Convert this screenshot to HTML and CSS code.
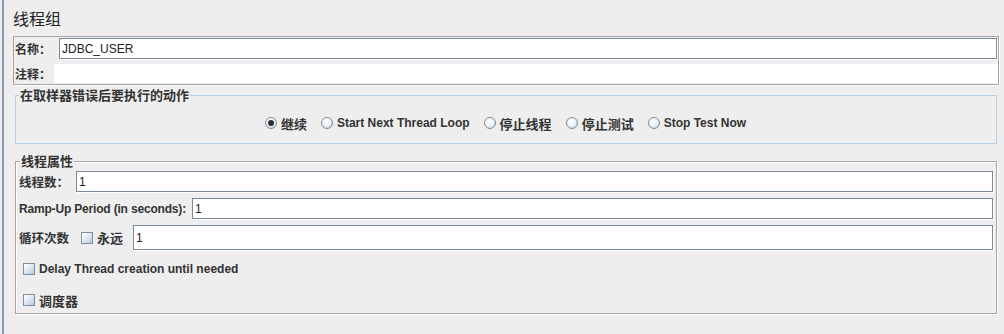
FILE: index.html
```html
<!DOCTYPE html>
<html lang="zh-CN">
<head>
    <meta charset="UTF-8">
    <title>线程组</title>
    <link rel="stylesheet" href="styles.css">
</head>
<body>
    <div class="page">
        <h1 class="title">线程组</h1>

        <!-- 名称 / 注释 -->
        <div class="name-box">
            <div class="field-row">
                <label class="zh lbl-name" for="name">名称：</label>
                <input class="text" id="name" type="text" value="JDBC_USER">
            </div>
            <div class="field-row comment-row">
                <label class="zh lbl-comment">注释：</label>
                <div class="comment-area"></div>
            </div>
        </div>

        <!-- 取样器错误 -->
        <fieldset class="group group-blue">
            <legend class="zh">在取样器错误后要执行的动作</legend>
            <div class="radio-row">
                <label class="opt"><span class="radio checked"></span><span class="zh">继续</span></label>
                <label class="opt"><span class="radio"></span>Start Next Thread Loop</label>
                <label class="opt"><span class="radio"></span><span class="zh">停止线程</span></label>
                <label class="opt"><span class="radio"></span><span class="zh">停止测试</span></label>
                <label class="opt"><span class="radio"></span>Stop Test Now</label>
            </div>
        </fieldset>

        <!-- 线程属性 -->
        <fieldset class="group group-etched">
            <legend class="zh">线程属性</legend>
            <div class="prop-row">
                <label class="zh lbl-threads">线程数：</label>
                <input class="text" type="text" value="1">
            </div>
            <div class="prop-row">
                <label class="lbl-ramp">Ramp-Up Period (in seconds):</label>
                <input class="text" type="text" value="1">
            </div>
            <div class="prop-row loop-row">
                <label class="zh lbl-loop">循环次数</label>
                <span class="check"></span>
                <span class="zh forever">永远</span>
                <input class="text" type="text" value="1">
            </div>
            <div class="check-row delay-row">
                <span class="check"></span>
                <span>Delay Thread creation until needed</span>
            </div>
            <div class="check-row sched-row">
                <span class="check"></span>
                <span class="zh">调度器</span>
            </div>
        </fieldset>
    </div>
</body>
</html>
```

FILE: styles.css
```css
body {
    margin: 0;
    background-color: #eeeeee;
    font-family: "Liberation Sans", Arial, "Noto Sans CJK SC", sans-serif;
    font-size: 12px;
    font-weight: bold;
    color: #333333;
    overflow: hidden;
}

.zh {
    font-family: "Noto Sans CJK SC", sans-serif;
    font-size: 13px;
}

.page {
    margin-left: 2px;
    border-left: 2px solid #8d9cab;
    padding: 8px 5px 0 9px;
    height: 326px;
}

.title {
    margin: 0 0 8px 0;
    height: 20px;
    line-height: 20px;
    font-family: "Noto Sans CJK SC", sans-serif;
    font-size: 16px;
    font-weight: normal;
    color: #222;
}

/* 名称 / 注释 框 */
.name-box {
    border: 1px solid #a6a6a6;
    box-shadow: 1px 1px 0 #fff;
    padding: 1px 0 0 1px;
    height: 46px;
    box-sizing: content-box;
}

.field-row {
    display: flex;
    align-items: center;
}

.field-row label {
    font-size: 12px;
    line-height: 16px;
}

.lbl-name {
    width: 44px;
}

.lbl-comment {
    width: 39px;
}

.comment-row {
    margin-top: 5px;
}

.comment-area {
    flex: 1;
    height: 19px;
    background: #fff;
}

.text {
    flex: 1;
    min-width: 0;
    height: 21px;
    box-sizing: border-box;
    margin: 0 1px 0 0;
    padding: 0 2px;
    border: 1px solid #7a8a99;
    box-shadow: 1px 1px 0 #fff;
    background: #fff;
    font-family: "Liberation Sans", Arial, sans-serif;
    font-size: 12px;
    font-weight: normal;
    color: #222;
    outline: none;
}

/* 分组框 */
.group {
    margin: 0 2px 0 2px;
    padding: 0 2px 0 3px;
    min-width: 0;
}

.group legend {
    padding: 0 1px;
    line-height: 16px;
}

.group-blue {
    margin-top: 2px;
    border: 1px solid #b8cfe5;
    padding-top: 12px;
    padding-bottom: 12px;
}

.group-etched {
    margin-top: 9px;
    border: 1px solid #a6a6a6;
    box-shadow: 1px 1px 0 #fff, inset 1px 1px 0 #fff;
    padding-top: 2px;
    padding-bottom: 5px;
}

.group-etched legend {
    margin-left: 1px;
}

.radio-row {
    display: flex;
    justify-content: center;
    align-items: center;
    gap: 14px;
    height: 16px;
    padding-right: 2px;
}

.opt {
    display: flex;
    align-items: center;
    gap: 4px;
    white-space: nowrap;
}

.radio {
    width: 12px;
    height: 12px;
    box-sizing: border-box;
    border-radius: 50%;
    border: 1px solid #7f8e9c;
    background: radial-gradient(circle at 40% 35%, #ffffff 0%, #eef3f8 45%, #b8cce0 100%);
    position: relative;
}

.radio.checked::after {
    content: "";
    position: absolute;
    left: 2px;
    top: 2px;
    width: 6px;
    height: 6px;
    border-radius: 50%;
    background: #2b2b2b;
}

.check {
    width: 12px;
    height: 12px;
    box-sizing: border-box;
    border: 1px solid #7f8e9c;
    background: linear-gradient(135deg, #ffffff 0%, #dfe9f3 50%, #b0c8e0 100%);
    flex: none;
}

/* 线程属性 行 */
.prop-row {
    display: flex;
    align-items: center;
    height: 21px;
    margin-bottom: 6px;
}

.lbl-threads {
    width: 57px;
    font-size: 12.5px;
}

.lbl-ramp {
    margin-right: 6px;
    white-space: nowrap;
    letter-spacing: -0.18px;
}

.loop-row {
    height: 25px;
    margin-bottom: 0;
}

.loop-row .text {
    height: 25px;
}

.lbl-loop {
    font-size: 12.5px;
    margin-right: 12px;
}

.forever {
    margin: 0 10px 0 4px;
}

.check-row {
    display: flex;
    align-items: center;
    gap: 4px;
    height: 16px;
    padding-left: 4px;
}

.delay-row {
    margin-top: 11px;
}

.sched-row {
    margin-top: 15px;
}
```
